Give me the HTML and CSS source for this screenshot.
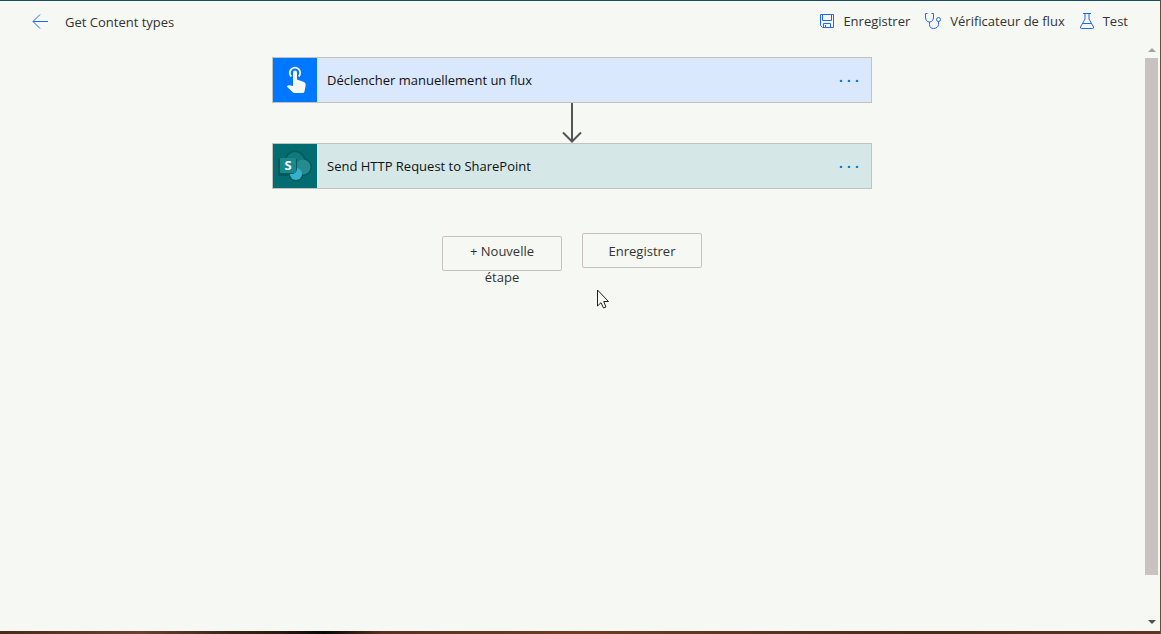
FILE: index.html
```html
<!DOCTYPE html>
<html lang="fr">
<head>
    <meta charset="UTF-8">
    <meta name="viewport" content="width=device-width, initial-scale=1.0">
    <title>Get Content types</title>
    <link rel="stylesheet" href="styles.css">
</head>
<body>
    <header class="topbar">
        <button class="back" aria-label="Retour">
            <svg width="18" height="16" viewBox="0 0 18 16"><path d="M8 0.5 L1 7.5 L8 14.5 M1 7.5 H16"/></svg>
        </button>
        <h1>Get Content types</h1>

        <div class="commands">
            <button class="command">
                <svg width="16" height="16" viewBox="0 0 16 16"><path d="M1.5 1.5 H14.5 V14.5 H3.5 L1.5 12.5 Z M3.5 1.5 V7.5 H12.5 V1.5 M4.5 14.5 V10.5 H11.5 V14.5 M6.5 12 V14.5"/></svg>
                Enregistrer
            </button>
            <button class="command">
                <svg width="18" height="18" viewBox="0 0 18 18"><path d="M3.5 1.5 H1.5 V5 C1.5 8 3 10 5.5 10 C8 10 9.5 8 9.5 5 V1.5 H7.5 M5.5 10 V12.5 C5.5 15 7 16.5 9.5 16.5 C12 16.5 14.5 15 14.5 12.5 V9.5"/><circle cx="14.5" cy="7.5" r="2"/></svg>
                Vérificateur de flux
            </button>
            <button class="command">
                <svg width="16" height="18" viewBox="0 0 16 18"><path d="M4 1.5 H12 M6 1.5 V7 L1.5 15 Q1 16.5 2.5 16.5 H13.5 Q15 16.5 14.5 15 L10 7 V1.5 M3.5 11.5 H12.5"/></svg>
                Test
            </button>
        </div>
    </header>

    <div class="workspace">
        <main class="canvas">
            <div class="card trigger">
                <div class="card-icon">
                    <svg width="44" height="44" viewBox="0 0 44 44">
                        <path d="M18.3 18.5 A5.2 5.2 0 1 1 25.7 18.5" fill="none" stroke="#f6f8f3" stroke-width="1.8"/>
                        <path d="M20 14.5 Q20 12.5 22 12.5 Q24 12.5 24 14.5 V21.5 L31 24 Q33 24.8 32.7 27 L31.5 33.5 Q31.2 35 29.7 35 H21.5 Q20.5 35 19.7 34.2 L13.8 28.5 L15 27.5 Q15.7 27 16.7 27.2 L20 28 Z" fill="#f6f8f3"/>
                    </svg>
                </div>
                <span class="card-title">Déclencher manuellement un flux</span>
                <button class="more" aria-label="Menu du déclencheur">
                    <svg width="22" height="4" viewBox="0 0 22 4"><circle cx="2" cy="3" r="1.3"/><circle cx="10" cy="3" r="1.3"/><circle cx="18" cy="3" r="1.3"/></svg>
                </button>
            </div>

            <svg class="arrow" width="20" height="40" viewBox="0 0 20 40"><path d="M10 0 V38 M1 29.5 L10 38.5 L19 29.5"/></svg>

            <div class="card action">
                <div class="card-icon">
                    <svg width="44" height="44" viewBox="0 0 44 44">
                        <g fill="#04595b">
                            <circle cx="22" cy="17" r="10.5"/>
                            <circle cx="30" cy="23" r="9"/>
                            <circle cx="23" cy="30" r="7.5"/>
                            <rect x="5" y="14" width="19" height="18" rx="2"/>
                        </g>
                        <circle cx="22" cy="17" r="9" fill="#11797c"/>
                        <circle cx="30" cy="23" r="7.5" fill="#258b90"/>
                        <circle cx="23" cy="30" r="6" fill="#35b1ce"/>
                        <path d="M8 14 H21 Q24 14 24 17 V24 Q24 30 18 30 H8 Z" fill="#04595b"/>
                        <rect x="7" y="14" width="16" height="15" rx="1" fill="#17898c"/>
                        <text x="15" y="26" class="logo-letter">S</text>
                    </svg>
                </div>
                <span class="card-title">Send HTTP Request to SharePoint</span>
                <button class="more" aria-label="Menu de l'action">
                    <svg width="22" height="4" viewBox="0 0 22 4"><circle cx="2" cy="3" r="1.3"/><circle cx="10" cy="3" r="1.3"/><circle cx="18" cy="3" r="1.3"/></svg>
                </button>
            </div>

            <div class="buttons">
                <button class="btn btn-step">+ Nouvelle étape</button>
                <button class="btn">Enregistrer</button>
            </div>

            <svg class="cursor" width="13" height="20" viewBox="0 0 13 20"><path d="M0.5 1 V17 L4 13.7 L6.5 19 L9 18 L6.7 12.5 H11.5 Z"/></svg>
        </main>

        <div class="scrollbar">
            <svg width="8" height="4" viewBox="0 0 8 4"><path d="M0 4 L4 0 L8 4 Z" fill="#a3a3a0"/></svg>
            <div class="track"><div class="thumb"></div></div>
            <svg width="8" height="4" viewBox="0 0 8 4"><path d="M0 0 L4 4 L8 0 Z" fill="#505050"/></svg>
        </div>
    </div>
    <div class="desktop-edge"></div>
</body>
</html>
```
FILE: styles.css
```css
*{
    box-sizing: border-box;
}
body{
    margin: 0;
    min-height: 100vh;
    display: flex;
    flex-direction: column;
    background-color: #f6f8f3;
    border-top: 1px solid #1f4a5e;
    border-right: 1px solid #6b4a3c;
    font-family: "Open Sans", "Noto Sans", sans-serif;
    font-size: 13px;
    color: #333333;
}
button{
    font: inherit;
    color: inherit;
    background: none;
    border: none;
    padding: 0;
}

.topbar{
    display: flex;
    align-items: center;
    height: 42px;
    padding: 0 32px;
}
.topbar svg{
    fill: none;
    stroke: #2266f5;
    stroke-width: 1;
}
.back{
    display: flex;
    margin-right: 15px;
}
.topbar h1{
    margin: 0;
    font-size: 13px;
    font-weight: normal;
}
.commands{
    display: flex;
    gap: 14px;
    margin-left: auto;
    padding-bottom: 2px;
}
.command{
    display: flex;
    align-items: center;
    gap: 8px;
}

.workspace{
    flex: 1;
    display: flex;
}
.canvas{
    position: relative;
    flex: 1;
    display: flex;
    flex-direction: column;
    align-items: center;
    padding-top: 14px;
}
.card{
    display: flex;
    align-items: center;
    width: 100%;
    max-width: 600px;
    border: 1px solid #c5c1be;
    color: #111111;
}
.trigger{
    background-color: #d9e8fd;
}
.action{
    background-color: #d5e8e7;
}
.card-icon{
    display: flex;
}
.trigger .card-icon{
    background-color: #0077ff;
}
.action .card-icon{
    background-color: #036c70;
}
.card-title{
    flex: 1;
    padding-left: 10px;
}
.more{
    display: flex;
    padding: 8px 10px;
}
.more svg{
    fill: #0a7fe0;
}
.logo-letter{
    font-size: 13px;
    font-weight: bold;
    fill: #ffffff;
    text-anchor: middle;
}
.arrow{
    fill: none;
    stroke: #555555;
    stroke-width: 2;
}

.buttons{
    display: flex;
    align-items: baseline;
    gap: 20px;
    margin-top: 44px;
}
.btn{
    display: flex;
    justify-content: center;
    align-items: flex-start;
    width: 120px;
    height: 35px;
    padding: 4px 20px;
    border: 1px solid #c8c0bd;
    border-radius: 2px;
    line-height: 26px;
}
.btn-step{
    padding-top: 1px;
}
.cursor{
    position: absolute;
    top: 246px;
    left: calc(50% + 25px);
    fill: #f6f8f3;
    stroke: #222222;
}

.scrollbar{
    display: flex;
    flex-direction: column;
    align-items: center;
    gap: 6px;
    width: 16px;
    padding: 5px 2px 7px 1px;
}
.track{
    flex: 1;
    width: 100%;
}
.thumb{
    height: 93%;
    background-color: #c8c2c0;
}

/* strip of the desktop below the window */
.desktop-edge{
    height: 3px;
    background: linear-gradient(to right, #4a2a18, #6b4030 12%, #3a2416 20%, #2c1a10 24%, #070709 28%, #5a301c 33%, #6e3c22 50%, #4a2a18 80%, #5f3520);
}
```
